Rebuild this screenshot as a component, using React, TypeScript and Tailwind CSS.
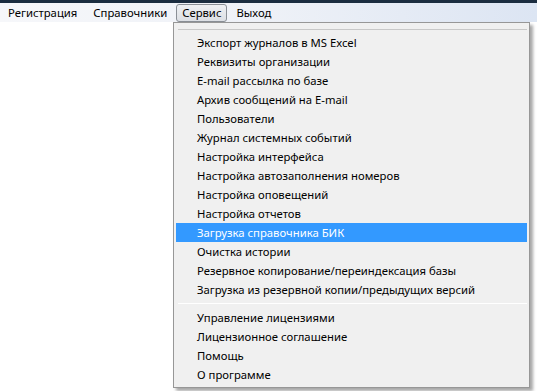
const topItems = ['Регистрация', 'Справочники', 'Сервис', 'Выход']

const groups = [
  [
    'Экспорт журналов в MS Excel',
    'Реквизиты организации',
    'E-mail рассылка по базе',
    'Архив сообщений на E-mail',
    'Пользователи',
    'Журнал системных событий',
    'Настройка интерфейса',
    'Настройка автозаполнения номеров',
    'Настройка оповещений',
    'Настройка отчетов',
    'Загрузка справочника БИК',
    'Очистка истории',
    'Резервное копирование/переиндексация базы',
    'Загрузка из резервной копии/предыдущих версий',
  ],
  ['Управление лицензиями', 'Лицензионное соглашение', 'Помощь', 'О программе'],
]

const active = 'Загрузка справочника БИК'

export default function App() {
  return (
    <div className="relative h-[391px] w-[537px] overflow-hidden bg-white text-[11.3px] text-black" style={{ fontFamily: '"Noto Sans", "DejaVu Sans", sans-serif' }}>
      <div className="h-[3px] bg-[#1b2d40]" />
      <div className="flex h-[19px] items-center bg-gradient-to-r from-[#f6f7fa] via-[#eef1f7] to-[#dce5f3]">
        {topItems.map((t) => (
          <div
            key={t}
            className={
              t === 'Сервис'
                ? 'mx-[1px] flex h-[18px] items-center rounded-[3px] border border-[#8a8f96] bg-gradient-to-b from-[#eef0f3] to-[#dcdfe4] px-[5px] leading-none'
                : 'flex h-[18px] items-center px-[8px] leading-none'
            }
          >
            {t}
          </div>
        ))}
      </div>

      <div className="absolute left-[173px] top-[22px] w-[357px] border border-[#979797] bg-[#f0f0f0] px-[2px] pb-[3px] pt-[6px] shadow-[3px_3px_3px_rgba(0,0,0,0.35)]">
        <div className="mb-[3px] ml-[2px] h-px bg-[#c8c8c8]" />
        {groups.map((g, gi) => (
          <div key={gi}>
            {gi > 0 && <div className="my-[4px] ml-[2px] h-px border-b border-white bg-[#a0a0a0]" />}
            {g.map((item) => (
              <div
                key={item}
                className={`flex h-[19px] items-center pl-[21px] leading-none ${item === active ? 'bg-[#3399ff] text-white' : ''}`}
              >
                {item}
              </div>
            ))}
          </div>
        ))}
      </div>
    </div>
  )
}
